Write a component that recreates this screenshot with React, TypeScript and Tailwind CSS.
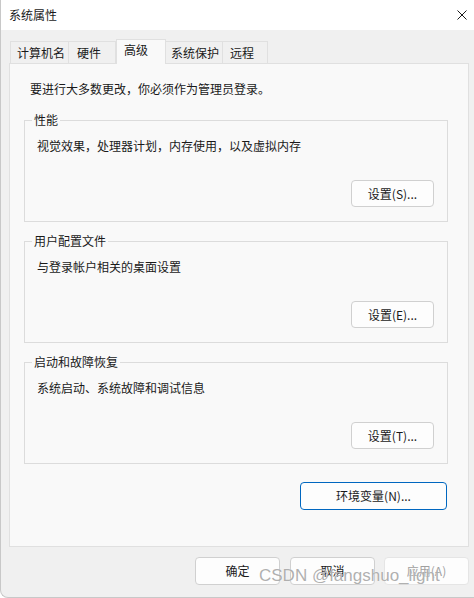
import React from 'react';

const font = { fontFamily: '"Noto Sans CJK SC", "Noto Sans", sans-serif' };

const tabs = [
    { name: '计算机名', w: 'w-[59px]', pl: 'pl-[6px]' },
    { name: '硬件', w: 'w-[48px]', pl: 'pl-[8px]' },
    { name: '高级', w: 'w-[50px]', pl: 'pl-[7px]', active: true },
    { name: '系统保护', w: 'w-[58px]', pl: 'pl-[5px]' },
    { name: '远程', w: 'w-[46px]', pl: 'pl-[7px]' },
];

const groups = [
    { title: '性能', desc: '视觉效果，处理器计划，内存使用，以及虚拟内存', btn: '设置(S)...' },
    { title: '用户配置文件', desc: '与登录帐户相关的桌面设置', btn: '设置(E)...' },
    { title: '启动和故障恢复', desc: '系统启动、系统故障和调试信息', btn: '设置(T)...' },
];

function Btn({ label, className = '', disabled = false }: { label: string; className?: string; disabled?: boolean }) {
    return (
        <button
            className={`h-[27px] rounded-[4px] border border-[#d0d0d0] bg-[#fdfdfd] text-[12px] leading-none ${disabled ? 'text-[#a0a0a0] border-[#e5e5e5] bg-[#f5f5f5]' : 'text-[#1a1a1a]'} ${className}`}>
            {label}
        </button>
    );
}

export default function App() {
    return (
        <div className="relative w-[474px] h-[598px] bg-[#f0f0f0] text-[12px] text-[#1a1a1a] border-l border-b border-[#c8c8c8] rounded-bl-[8px] overflow-hidden" style={font}>
            {/* Title bar */}
            <div className="h-[30px] bg-white flex items-center justify-between pl-[8px] pr-[7px]">
                <span className="leading-4">系统属性</span>
                <svg width="10" height="10" viewBox="0 0 10 10">
                    <path d="M0.5 0.5 L9.5 9.5 M9.5 0.5 L0.5 9.5" stroke="#1a1a1a" strokeWidth="1" />
                </svg>
            </div>

            {/* Tabs */}
            <div className="ml-[8px] mt-[9px] flex items-end pl-[1px] h-[24px]">
                {tabs.map(t => (
                    <div
                        key={t.name}
                        className={`${t.w} ${t.pl} flex items-center border border-[#e0e0e0] ${t.active
                            ? 'h-[25px] bg-[#f9f9f9] border-b-0 relative z-10 -mb-px pb-[4px]'
                            : 'h-[22px] bg-[#f0f0f0] border-b-0 -ml-px first:ml-0'}`}>
                        <span className="leading-4">{t.name}</span>
                    </div>
                ))}
            </div>

            {/* Panel */}
            <div className="ml-[8px] w-[460px] h-[484px] border border-[#e0e0e0] bg-[#f9f9f9] pt-[17px] pl-[14px]">
                <p className="leading-4 pl-[6px]">要进行大多数更改，你必须作为管理员登录。</p>

                <div className="mt-[15px] flex flex-col gap-[11px]">
                    {groups.map(g => (
                        <fieldset key={g.title} className="w-[424px] h-[110px] border border-[#dcdcdc] pl-[7px] pr-[13px]">
                            <legend className="px-[2px] leading-4">{g.title}</legend>
                            <p className="mt-[10px] leading-4 pl-[5px]">{g.desc}</p>
                            <div className="mt-[26px] flex justify-end">
                                <Btn label={g.btn} className="w-[83px]" />
                            </div>
                        </fieldset>
                    ))}
                </div>

                <div className="w-[423px] mt-[18px] flex justify-end">
                    <button className="w-[147px] h-[28px] rounded-[4px] border border-[#0067c0] bg-[#fdfdfd] text-[12px] text-[#1a1a1a]">
                        环境变量(N)...
                    </button>
                </div>
            </div>

            {/* Bottom buttons */}
            <div className="mt-[10px] flex pl-[194px] gap-[11px]">
                <Btn label="确定" className="w-[85px] h-[28px]" />
                <Btn label="取消" className="w-[85px] h-[28px] -ml-px" />
                <Btn label="应用(A)" className="w-[85px] h-[28px] -ml-[2px]" disabled />
            </div>

            {/* Watermark */}
            <span
                className="absolute left-[258px] top-[566px] text-[17px] leading-5 text-[#9a9a9a]/80"
                style={{ fontFamily: '"Liberation Sans", Arial, sans-serif', textShadow: '0 0 1px #fff' }}>
                CSDN @fangshuo_light
            </span>
        </div>
    );
}
